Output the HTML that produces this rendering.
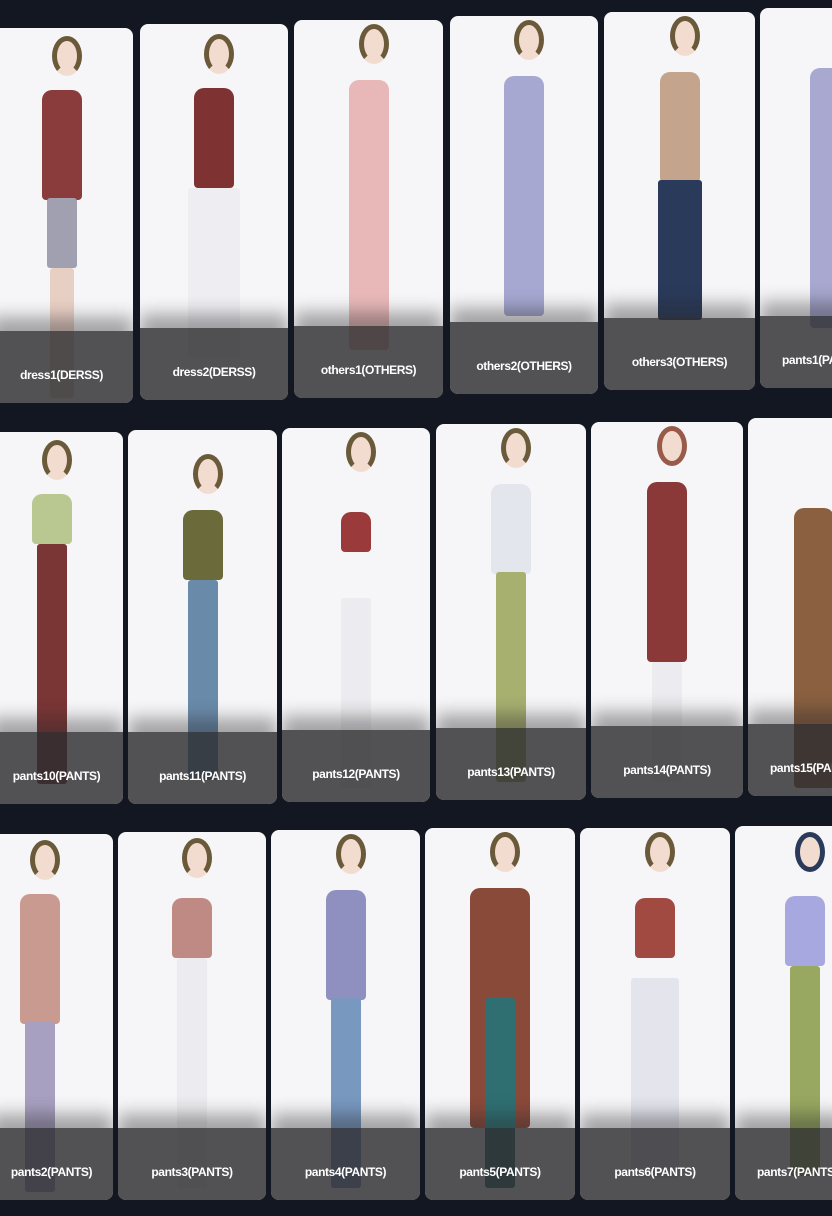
<!DOCTYPE html>
<html><head><meta charset="utf-8"><style>
body{margin:0;width:832px;height:1216px;background:#121722;overflow:hidden;position:relative;font-family:"Liberation Sans",sans-serif}
.c{position:absolute;background:#f6f6f8;border-radius:8px;overflow:hidden}
.f{position:absolute;left:50%;top:0;width:0;height:100%}
.h{position:absolute;width:20px;height:30px;left:-10px;border-radius:50%;background:#f2dcd0;border:5px solid #6b5a3a;border-bottom-color:transparent;box-sizing:content-box}
.t{position:absolute;left:-20px;width:40px;border-radius:10px 10px 4px 4px}
.l{position:absolute;left:-15px;width:30px;border-radius:3px}
.b{position:absolute;left:0;right:0;bottom:0;height:72px;background:rgba(45,45,47,.82);box-shadow:0 -14px 16px rgba(40,40,42,.4);color:#fff;font-size:12px;font-weight:bold;letter-spacing:-0.4px;text-align:center;line-height:88px;white-space:nowrap}
</style></head><body>
<!-- row 1 -->
<div class="c" style="left:-10px;top:28px;width:143px;height:375px"><div class="f" style="left:72px"><div class="h" style="top:8px"></div><div class="t" style="top:62px;height:110px;background:#8a3b3b"></div><div class="l" style="top:170px;height:70px;background:#a0a0b0"></div><div class="l" style="top:240px;height:130px;left:-12px;width:24px;background:#e8cfc4"></div></div><div class="b">dress1(DERSS)</div></div>
<div class="c" style="left:140px;top:24px;width:148px;height:376px"><div class="f"><div class="h" style="top:10px"></div><div class="t" style="top:64px;height:100px;background:#7e3232"></div><div class="l" style="top:164px;height:170px;left:-26px;width:52px;background:#eeeef2"></div></div><div class="b">dress2(DERSS)</div></div>
<div class="c" style="left:294px;top:20px;width:149px;height:378px"><div class="f"><div class="h" style="top:4px"></div><div class="t" style="top:60px;height:270px;background:#e8b8b8"></div></div><div class="b">others1(OTHERS)</div></div>
<div class="c" style="left:450px;top:16px;width:148px;height:378px"><div class="f"><div class="h" style="top:4px"></div><div class="t" style="top:60px;height:240px;background:#a6a8d2"></div></div><div class="b">others2(OTHERS)</div></div>
<div class="c" style="left:604px;top:12px;width:151px;height:378px"><div class="f"><div class="h" style="top:4px"></div><div class="t" style="top:60px;height:110px;background:#c4a48c"></div><div class="l" style="top:168px;height:140px;left:-22px;width:44px;background:#2a3a5a"></div></div><div class="b">others3(OTHERS)</div></div>
<div class="c" style="left:760px;top:8px;width:90px;height:380px"><div class="f" style="left:70px"><div class="t" style="top:60px;height:260px;background:#a8a8d0"></div></div><div class="b" style="text-align:left;padding-left:22px">pants1(PA</div></div>
<!-- row 2 -->
<div class="c" style="left:-10px;top:432px;width:133px;height:372px"><div class="f" style="left:62px"><div class="h" style="top:8px"></div><div class="t" style="top:62px;height:50px;background:#b8c890"></div><div class="l" style="top:112px;height:240px;background:#7a3535"></div></div><div class="b">pants10(PANTS)</div></div>
<div class="c" style="left:128px;top:430px;width:149px;height:374px"><div class="f"><div class="h" style="top:24px"></div><div class="t" style="top:80px;height:70px;background:#6a6a3a"></div><div class="l" style="top:150px;height:200px;background:#6a8aaa"></div></div><div class="b">pants11(PANTS)</div></div>
<div class="c" style="left:282px;top:428px;width:148px;height:374px"><div class="f"><div class="h" style="top:4px"></div><div class="t" style="top:84px;height:40px;width:30px;left:-15px;background:#9a3a3a"></div><div class="l" style="top:170px;height:190px;background:#ececf0"></div></div><div class="b">pants12(PANTS)</div></div>
<div class="c" style="left:436px;top:424px;width:150px;height:376px"><div class="f"><div class="h" style="top:4px"></div><div class="t" style="top:60px;height:90px;background:#e4e6ee"></div><div class="l" style="top:148px;height:210px;background:#a8b070"></div></div><div class="b">pants13(PANTS)</div></div>
<div class="c" style="left:591px;top:422px;width:152px;height:376px"><div class="f"><div class="h" style="top:4px;border-color:#9a5a4a"></div><div class="t" style="top:60px;height:180px;background:#8a3838"></div><div class="l" style="top:240px;height:120px;background:#ececf0"></div></div><div class="b">pants14(PANTS)</div></div>
<div class="c" style="left:748px;top:418px;width:100px;height:378px"><div class="f" style="left:66px"><div class="t" style="top:90px;height:280px;background:#8a6040"></div></div><div class="b" style="text-align:left;padding-left:22px">pants15(PAN</div></div>
<!-- row 3 -->
<div class="c" style="left:-10px;top:834px;width:123px;height:366px"><div class="f" style="left:50px"><div class="h" style="top:6px"></div><div class="t" style="top:60px;height:130px;background:#c89a90"></div><div class="l" style="top:188px;height:170px;background:#a8a0c0"></div></div><div class="b">pants2(PANTS)</div></div>
<div class="c" style="left:118px;top:832px;width:148px;height:368px"><div class="f"><div class="h" style="top:6px"></div><div class="t" style="top:66px;height:60px;background:#c08a84"></div><div class="l" style="top:126px;height:230px;background:#ececf0"></div></div><div class="b">pants3(PANTS)</div></div>
<div class="c" style="left:271px;top:830px;width:149px;height:370px"><div class="f"><div class="h" style="top:4px"></div><div class="t" style="top:60px;height:110px;background:#9090c0"></div><div class="l" style="top:168px;height:190px;background:#7898c0"></div></div><div class="b">pants4(PANTS)</div></div>
<div class="c" style="left:425px;top:828px;width:150px;height:372px"><div class="f"><div class="h" style="top:4px"></div><div class="t" style="top:60px;height:240px;width:60px;left:-30px;background:#8a4a3a"></div><div class="l" style="top:170px;height:190px;background:#2f6f72"></div></div><div class="b">pants5(PANTS)</div></div>
<div class="c" style="left:580px;top:828px;width:150px;height:372px"><div class="f"><div class="h" style="top:4px"></div><div class="t" style="top:70px;height:60px;background:#a04a42"></div><div class="l" style="top:150px;height:200px;left:-24px;width:48px;background:#e4e4ec"></div></div><div class="b">pants6(PANTS)</div></div>
<div class="c" style="left:735px;top:826px;width:110px;height:374px"><div class="f" style="left:70px"><div class="h" style="top:6px;border-color:#2a3a5a"></div><div class="t" style="top:70px;height:70px;background:#a8a8e0"></div><div class="l" style="top:140px;height:210px;background:#98a860"></div></div><div class="b" style="text-align:left;padding-left:22px">pants7(PANTS</div></div>
</body></html>
